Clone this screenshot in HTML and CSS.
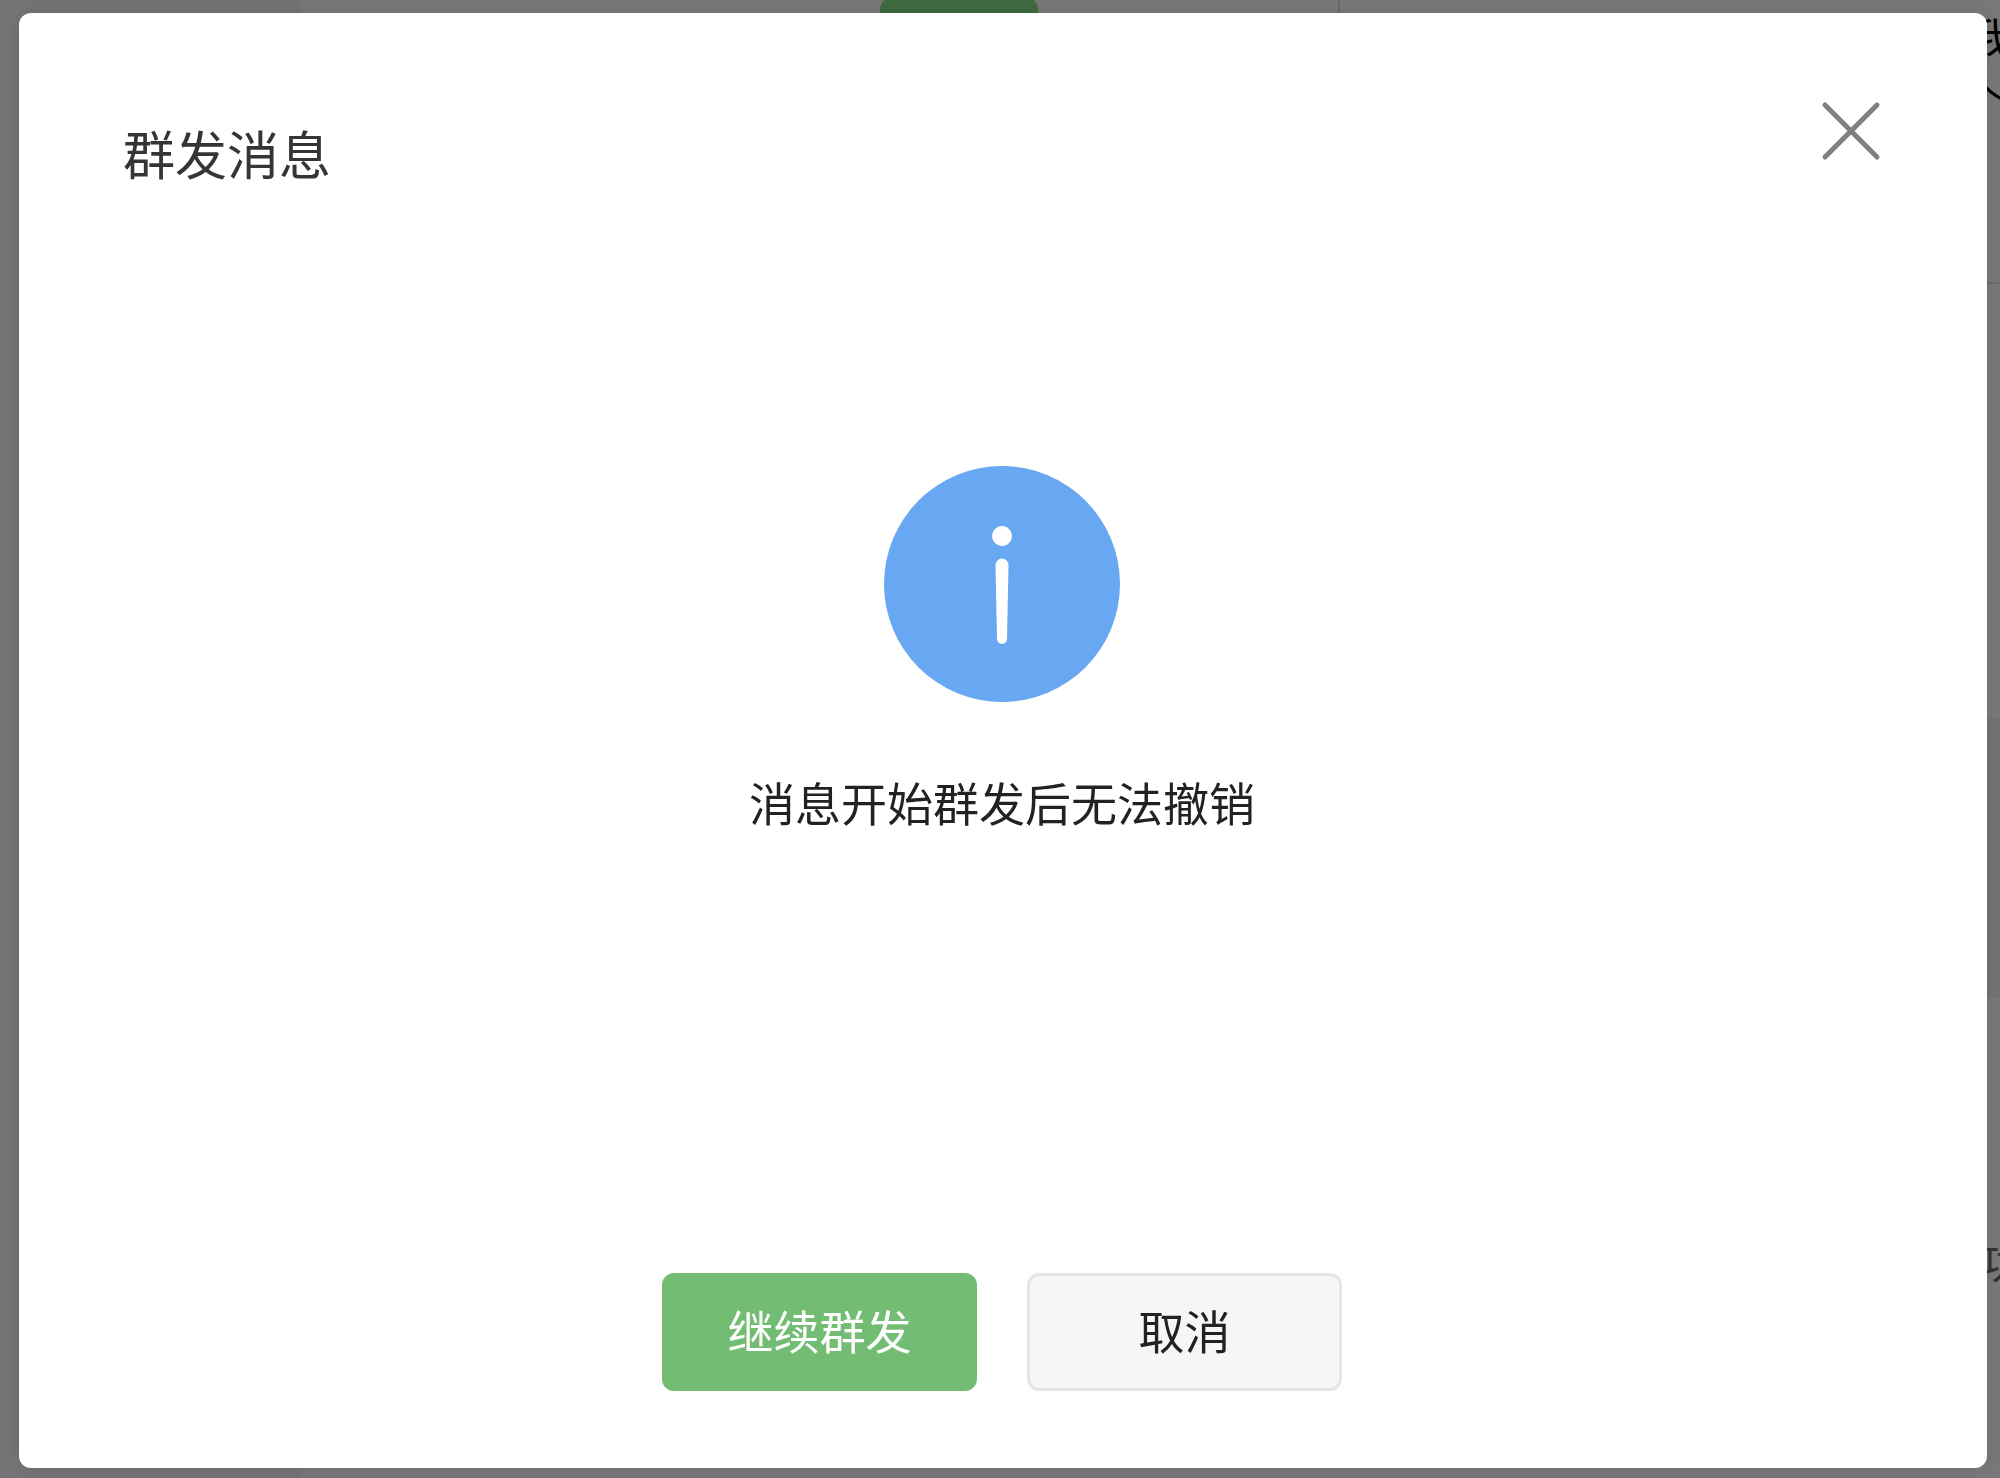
FILE: index.html
```
<!DOCTYPE html>
<html lang="zh-Hans">
<head>
  <meta charset="UTF-8">
  <meta name="viewport" content="width=device-width, initial-scale=1.0">
  <title>群发消息</title>
  <link rel="stylesheet" href="styles.css">
</head>
<body>
  <div class="page">
    <div class="sidebar"></div>
    <div class="main">
      <div class="tab-active"></div>
    </div>
    <div class="preview"></div>
    <div class="aside">
      <div class="aside-top">
        <span class="aside-name">我</span>
        <svg class="aside-arrow" width="40" height="20" viewBox="0 0 40 20" fill="none" stroke="#000" stroke-width="3">
          <path d="M2 18 Q10 10 14 2 Q20 10 32 16"/>
        </svg>
      </div>
      <div class="aside-block"></div>
      <span class="aside-tip">功</span>
    </div>
  </div>

  <div class="mask">
    <div class="dialog" role="dialog" aria-modal="true" aria-labelledby="dialog-title">
      <div class="dialog-header">
        <h3 id="dialog-title">群发消息</h3>
        <button class="close" type="button" aria-label="关闭">
          <svg width="60" height="60" viewBox="0 0 60 60" stroke="#808080" stroke-width="5" stroke-linecap="round">
            <path d="M4 4 L56 56 M56 4 L4 56"/>
          </svg>
        </button>
      </div>

      <div class="dialog-body">
        <svg class="info-icon" width="236" height="236" viewBox="0 0 236 236">
          <circle cx="118" cy="118" r="118" fill="#68a8f3"/>
          <circle cx="118" cy="70" r="10" fill="#fff"/>
          <path d="M111.500 99 a6.500 6.500 0 0 1 13 0 L123 173 a5 5 0 0 1 -10 0 Z" fill="#fff"/>
        </svg>
        <p>消息开始群发后无法撤销</p>
      </div>

      <div class="dialog-footer">
        <button class="btn primary" type="button">继续群发</button>
        <button class="btn" type="button">取消</button>
      </div>
    </div>
  </div>
</body>
</html>
```
FILE: styles.css
```
* {
  box-sizing: border-box;
}
body {
  margin: 0;
  font-family: "Liberation Sans", "Noto Sans CJK SC", sans-serif;
  background-color: #f0f0f0;
}
button {
  font-family: inherit;
  cursor: pointer;
}

/* 背景頁面 */
.page {
  display: flex;
  height: 100vh;
  overflow: hidden;
}
.sidebar {
  width: 301px;
  background-color: #e8e8e8;
}
.main {
  flex: 1;
  margin-bottom: 40px;
  padding-left: 579px;
  border-right: 2px solid #d4d4d4;
}
.tab-active {
  width: 158px;
  height: 60px;
  margin-top: -4px;
  border-radius: 14px;
  background-color: #7ed680;
}
.preview {
  width: 630px;
}
.aside {
  width: 30px;
  white-space: nowrap;
}
.aside-top {
  height: 284px;
  padding-top: 12px;
  border-bottom: 2px solid #d8d8d8;
}
.aside-name {
  display: block;
  font-size: 42px;
  line-height: 56px;
  color: #000;
}
.aside-arrow {
  display: block;
  margin-top: 15px;
}
.aside-block {
  height: 280px;
  margin-top: 434px;
  background-color: #e3e8e5;
}
.aside-tip {
  display: block;
  margin-top: 242px;
  padding-left: 10px;
  font-size: 42px;
  line-height: 50px;
  color: #666;
}

/* 彈窗 */
.mask {
  position: fixed;
  top: 0;
  right: 0;
  bottom: 0;
  left: 0;
  display: flex;
  padding: 13px 13px 10px 19px;
  background-color: rgba(0, 0, 0, 0.5);
}
.dialog {
  flex: 1;
  display: flex;
  flex-direction: column;
  padding: 88px 106px 77px 104px;
  border-radius: 12px;
  background-color: #fff;
  box-shadow: 0 0 20px rgba(0, 0, 0, 0.1);
}
.dialog-header {
  display: flex;
  justify-content: space-between;
  align-items: flex-start;
}
.dialog-header h3 {
  margin: 18px 0 0;
  font-size: 52px;
  font-weight: 400;
  line-height: 76px;
  color: #353535;
}
.close {
  padding: 0;
  border: none;
  background: none;
}
.close svg,
.info-icon {
  display: block;
}
.dialog-body {
  display: flex;
  flex-direction: column;
  align-items: center;
  gap: 70px;
  padding-top: 271px;
}
.dialog-body p {
  margin: 0;
  font-size: 46px;
  line-height: 66px;
  color: #222;
}
.dialog-footer {
  display: flex;
  justify-content: center;
  gap: 50px;
  margin-top: auto;
}
.btn {
  width: 315px;
  height: 118px;
  padding: 0 0 6px;
  border: 3px solid #e4e6e7;
  border-radius: 12px;
  background-color: #f5f6f8;
  font-size: 46px;
  color: #222;
}
.btn.primary {
  border-color: #73bc74;
  background-color: #73bc74;
  color: #fff;
}
```
